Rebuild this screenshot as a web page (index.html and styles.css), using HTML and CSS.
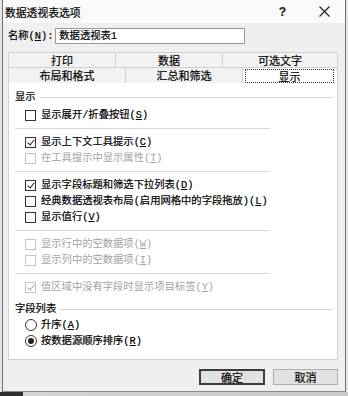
FILE: index.html
```html
<!DOCTYPE html>
<html lang="zh-CN">
<head>
    <meta charset="UTF-8">
    <title>数据透视表选项</title>
    <link rel="stylesheet" href="styles.css">
</head>
<body>

<div class="dialog">
    <!-- Title bar -->
    <div class="titlebar">
        <span class="title">数据透视表选项</span>
        <span class="help">?</span>
        <svg class="close" width="11" height="11" viewBox="0 0 11 11">
            <path d="M0.5 0.5 L10.5 10.5 M10.5 0.5 L0.5 10.5" stroke="#222" stroke-width="1.2" fill="none"/>
        </svg>
    </div>

    <div class="body">
        <!-- Name -->
        <div class="name-row">
            <span class="name-label">名称(<u>N</u>):</span>
            <div class="name-input">数据透视表1</div>
        </div>

        <!-- Tabs -->
        <div class="tabs">
            <div class="tab-row">
                <div class="tab w107">打印</div>
                <div class="tab w107">数据</div>
                <div class="tab w116 last">可选文字</div>
            </div>
            <div class="tab-row">
                <div class="tab w117">布局和格式</div>
                <div class="tab w117">汇总和筛选</div>
                <div class="tab w96 last active"><span class="focus">显示</span></div>
            </div>
        </div>

        <!-- Panel -->
        <div class="panel">
            <div class="group-title"><span>显示</span><i class="group-line"></i></div>

            <div class="option first">
                <span class="box"></span><span class="label">显示展开/折叠按钮(<u>S</u>)</span>
            </div>
            <div class="sep"></div>

            <div class="option">
                <span class="box checked"></span><span class="label">显示上下文工具提示(<u>C</u>)</span>
            </div>
            <div class="option disabled">
                <span class="box"></span><span class="label">在工具提示中显示属性(<u>T</u>)</span>
            </div>
            <div class="sep"></div>

            <div class="option">
                <span class="box checked"></span><span class="label">显示字段标题和筛选下拉列表(<u>D</u>)</span>
            </div>
            <div class="option">
                <span class="box"></span><span class="label">经典数据透视表布局(启用网格中的字段拖放)(<u>L</u>)</span>
            </div>
            <div class="option">
                <span class="box"></span><span class="label">显示值行(<u>V</u>)</span>
            </div>
            <div class="sep"></div>

            <div class="option disabled">
                <span class="box"></span><span class="label">显示行中的空数据项(<u>W</u>)</span>
            </div>
            <div class="option disabled">
                <span class="box"></span><span class="label">显示列中的空数据项(<u>I</u>)</span>
            </div>
            <div class="sep"></div>

            <div class="option disabled">
                <span class="box checked"></span><span class="label">值区域中没有字段时显示项目标签(<u>Y</u>)</span>
            </div>

            <div class="group-title second"><span>字段列表</span><i class="group-line"></i></div>

            <div class="option">
                <span class="radio"></span><span class="label">升序(<u>A</u>)</span>
            </div>
            <div class="option">
                <span class="radio on"></span><span class="label">按数据源顺序排序(<u>R</u>)</span>
            </div>
        </div>

        <!-- Buttons -->
        <div class="buttons">
            <button class="btn default">确定</button>
            <button class="btn">取消</button>
        </div>
    </div>
</div>

<div class="desk-strip"></div>

</body>
</html>
```

FILE: styles.css
```css
/* Global */
* {
    margin: 0;
    padding: 0;
    box-sizing: border-box;
}

body {
    width: 348px;
    height: 396px;
    overflow: hidden;
    background-color: #e6e6e6;
    font-family: "Liberation Mono", "Noto Sans CJK SC", monospace;
    font-size: 10.3px;
    line-height: 16px;
    color: #000;
    -webkit-text-stroke: 0.2px;
}

u {
    text-decoration: underline;
    text-underline-offset: 1px;
}

/* Window */
.dialog {
    margin-left: 2px;
    width: 344px;
    height: 392px;
    background-color: #efefef;
    border-left: 1px solid #6f6f6f;
    border-right: 1px solid #6f6f6f;
    border-bottom: 1px solid #8a8a8a;
}

.titlebar {
    height: 23px;
    background-color: #fafafa;
    display: flex;
    align-items: center;
    padding-left: 2px;
}

.title {
    flex: 1;
    font-family: "Noto Sans CJK SC", sans-serif;
    font-size: 10.8px;
}

.help {
    font-family: "Liberation Sans", sans-serif;
    font-weight: bold;
    font-size: 12px;
    margin-right: 33px;
    color: #222;
}

.close {
    margin-right: 15px;
}

.body {
    padding: 5px 7px 0 5px;
}

/* Name row */
.name-row {
    display: flex;
    align-items: center;
    height: 16px;
    margin-bottom: 8px;
}

.name-label {
    white-space: nowrap;
    margin-right: 2px;
}

.name-input {
    width: 190px;
    height: 16px;
    background: #fff;
    border: 1px solid #9a9a9a;
    padding-left: 3px;
    line-height: 14px;
}

/* Tabs */
.tab-row {
    display: flex;
}

.tab {
    height: 15px;
    line-height: 15px;
    text-align: center;
    font-family: "Noto Sans CJK SC", sans-serif;
    font-size: 11px;
    background-color: #f2f2f2;
    border-left: 1px solid #d0d0d0;
    border-top: 1px solid #d0d0d0;
}

.tab.last {
    border-right: 1px solid #d0d0d0;
}

.tab-row + .tab-row .tab {
    height: 16px;
    line-height: 15px;
}

.w96 { width: 96px; }
.w107 { width: 107px; }
.w116 { width: 116px; }
.w117 { width: 117px; }

.tab.active {
    background-color: #fff;
    padding: 1px 3px 0 2px;
}

.focus {
    display: block;
    height: 14px;
    line-height: 12px;
    border: 1px dotted #333;
}

/* Panel */
.panel {
    background-color: #fff;
    border: 1px solid #d0d0d0;
    border-top: none;
    height: 277px;
    padding: 6px 4px 0 6px;
}

.group-title {
    display: flex;
    align-items: center;
    height: 16px;
}

.group-title span {
    margin-right: 3px;
}

.group-line {
    flex: 1;
    height: 1px;
    background-color: #d9d9d9;
}

.group-title.second {
    margin-top: 6px;
}

.option {
    display: flex;
    align-items: center;
    height: 16px;
    padding-left: 10px;
}

.label {
    white-space: nowrap;
}

.option.first {
    margin-top: 2px;
}

.option.disabled {
    color: #a3a3a3;
    -webkit-text-stroke: 0;
}

.sep {
    width: 255px;
    height: 1px;
    background-color: #d9d9d9;
    margin: 5px 0;
}

/* Checkbox */
.box {
    width: 11px;
    height: 11px;
    border: 1px solid #333;
    background: #fff;
    margin-right: 5px;
    position: relative;
    flex-shrink: 0;
}

.disabled .box {
    border-color: #c4c4c4;
}

.box.checked::after {
    content: "";
    position: absolute;
    left: 3px;
    top: 0px;
    width: 3px;
    height: 6px;
    border-right: 1.5px solid #222;
    border-bottom: 1.5px solid #222;
    transform: rotate(40deg);
}

.disabled .box.checked::after {
    border-color: #a8a8a8;
}

/* Radio */
.radio {
    width: 12px;
    height: 12px;
    border: 1px solid #333;
    border-radius: 50%;
    background: #fff;
    margin-right: 4px;
    position: relative;
    flex-shrink: 0;
}

.radio.on::after {
    content: "";
    position: absolute;
    left: 2px;
    top: 2px;
    width: 6px;
    height: 6px;
    border-radius: 50%;
    background: #222;
}

/* Buttons */
.buttons {
    display: flex;
    justify-content: flex-end;
    gap: 8px;
    margin-top: 9px;
}

.btn {
    width: 65px;
    height: 16px;
    font-family: "Noto Sans CJK SC", sans-serif;
    font-size: 11px;
    line-height: 13px;
    background-color: #e1e1e1;
    border: 1px solid #adadad;
    color: #000;
    -webkit-text-stroke: 0.2px;
}

.btn.default {
    border: 2px solid #3c3c3c;
    width: 66px;
}

/* Desktop behind the dialog */
.desk-strip {
    height: 4px;
    background: linear-gradient(to right, #2e2e2e 0, #2e2e2e 23px, #d4d4d4 23px, #c9c9c9 100%);
}
```
